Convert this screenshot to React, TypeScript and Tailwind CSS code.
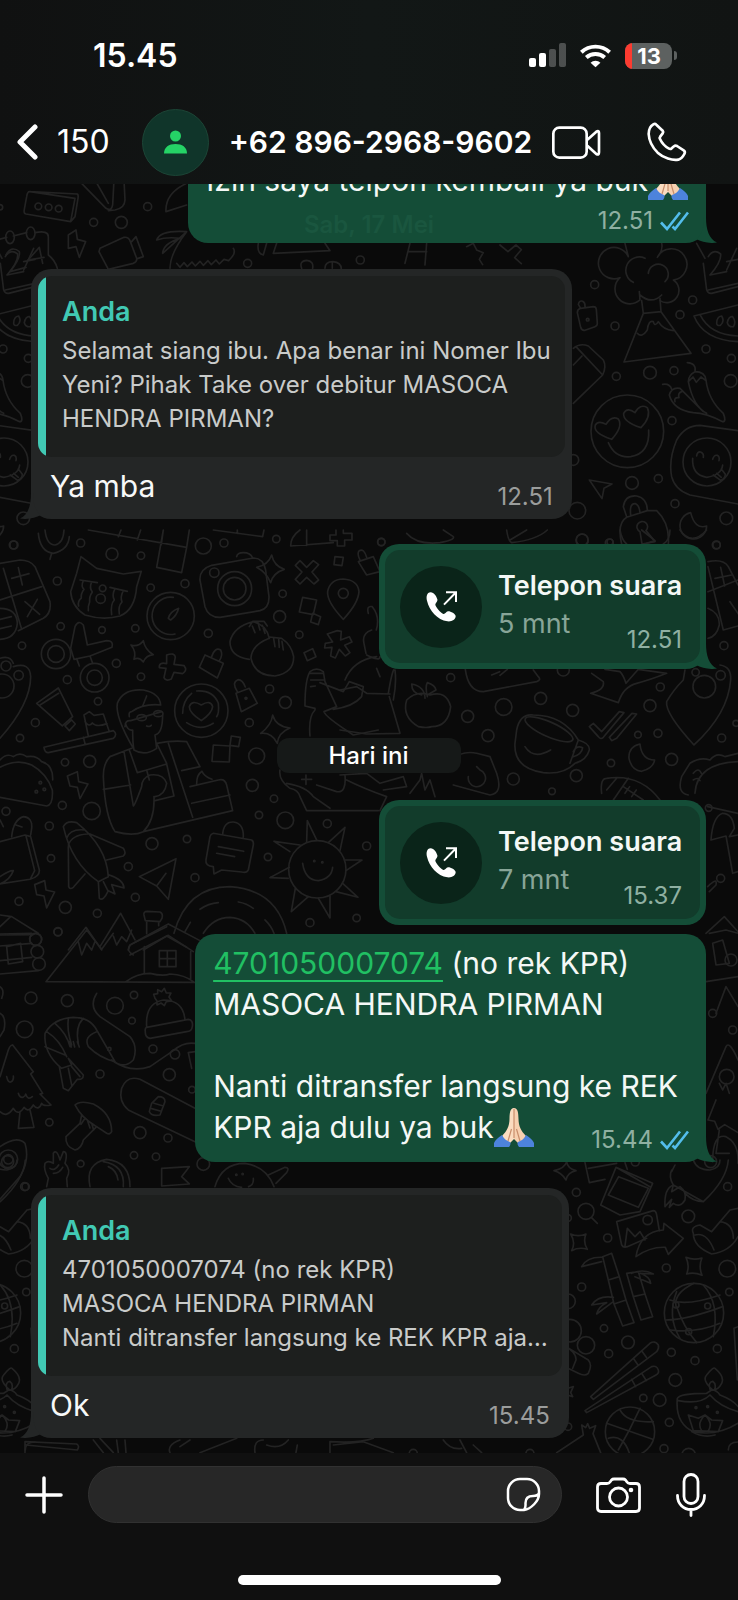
import type { ReactNode } from "react";

type Dot = [number, number, number];

function Dots({ items }: { items: Dot[] }) {
  return (
    <>
      {items.map(([x, y, r]) => (
        <circle key={`${x}-${y}`} cx={x} cy={y} r={r} />
      ))}
    </>
  );
}

function DoodlesTop() {
  return (
    <g transform="translate(0 180) scale(.3333)">
      <path d="M90 35 L225 55 L212 125 L78 102 Q70 100 73 88 L80 50 Q82 34 90 35 L232 42 Q236 45 234 55 L225 110 L212 125" />
      <Dots items={[[115, 79, 10], [146, 82, 10], [176, 86, 10], [443, 80, 12], [281, 127, 12], [364, 127, 18], [0, 82, 8], [743, 250, 12], [1081, 240, 12]]} />
      <path d="M235 0 L318 85 Q335 95 338 75 L342 0 M285 0 L325 70 M372 0 L375 60 Q374 85 345 90 L325 92 M498 95 Q495 40 560 10 M498 95 L560 75" />
      <path d="M205 165 L228 150 L232 178 L257 185 L238 232 L228 200 L205 205Z" />
      <path d="M300 205 L372 172 Q385 170 390 182 L410 235 Q412 245 400 250 L325 268 L297 215Z M395 185 L408 170 L430 230 L412 236" />
      <path d="M560 155 Q480 150 470 180 Q500 170 540 175 Q490 190 488 220 L560 155 Q510 220 510 265 M530 250 l10 12 l12 -14 l10 12 l14 -14 l10 12 l14 -14 l10 12 l14 -14 l10 12 l14 -14 l10 12 l14 -14 l14 4 Q710 220 700 205" />
      <path d="M775 190 Q770 220 790 225 L800 190 M830 190 L820 220 L990 212 L975 190 M905 265 q-8 -22 15 -24 q22 2 18 24 M975 265 q0 -20 24 -20 q25 2 25 22 M997 250 v15" />
      <path d="M1230 190 l-15 60 M1225 215 h55 M1280 190 l-5 65 M1400 200 l20 -10 l10 20 l20 8 l-12 20 l10 16 M1500 195 l24 20 l24 -20 l16 14 l-20 24 l20 18" />
      <path d="M-10 180 L20 172 M40 168 L80 158 M105 158 Q145 150 145 170 L145 225 Q165 240 172 265" />
      <ellipse cx="30" cy="172" rx="13" ry="19" />
      <ellipse cx="92" cy="160" rx="13" ry="19" />
      <path d="M18 225 Q35 195 58 215 Q62 235 30 275 L78 262 M128 250 L118 202 L84 240 L132 232" />
    </g>
  );
}

function DoodlesEmoji({ x }: { x: number }) {
  return (
    <g transform={`translate(${x} 240) scale(.3333)`}>
      <path d="M195 10 Q200 30 205 50 A47 47 0 1 0 180 113 A42 42 0 1 0 240 180 L238 155 M305 10 Q310 30 292 52 A47 47 0 1 1 340 120 A36 36 0 1 1 300 182 M240 165 Q275 195 305 165 M255 55 A40 40 0 0 0 220 127 M265 100 A30 30 0 1 1 315 125" />
      <path d="M245 182 L250 220 L303 215 L300 175 M250 220 L192 366 L393 340 L303 215 M232 280 Q245 295 262 270 Q265 240 280 245 Q285 262 295 245 Q310 270 340 272" />
      <path d="M62 205 L100 200 Q108 200 109 208 L112 250 Q112 258 105 260 L75 271 Q65 273 62 262 L52 218 Q52 208 62 205 M62 205 L55 193 Q58 180 68 184 Q76 188 75 200" />
      <path d="M40 325 Q60 308 85 318 L130 360 Q140 380 128 405 L40 490 M50 322 L128 405 M40 375 L66 348" />
      <circle cx="202" cy="574" r="109" />
      <path d="M155 598 Q98 580 106 555 Q115 540 138 553 Q155 525 175 537 Q190 560 155 598Z M243 563 Q188 545 191 520 Q202 500 225 518 Q240 490 262 503 Q275 530 243 563Z M145 608 Q165 655 212 650 Q270 640 266 570" />
      <path d="M534 572 L420 556 Q375 556 350 600 Q325 660 335 710 Q345 750 390 765 L534 792" />
      <circle cx="441" cy="666" r="72" />
      <path d="M398 655 Q395 705 440 712 Q485 705 488 675 M410 648 q2 -14 12 -12 q10 4 8 16 M458 658 q4 -14 14 -12 q8 4 5 16 M460 705 l22 16 q14 -4 14 -18 l-12 -16 M470 700 l14 12" />
      <path d="M88 720 L156 732 L132 745 L126 776Z" />
      <path d="M200 830 L190 800 Q195 765 230 768 Q262 775 262 812 L290 812 Q330 850 325 912 M262 812 L200 832 Q170 850 185 912 M212 825 q-4 -36 14 -34 q12 4 14 28 M240 875 A16 16 0 1 1 258 872 L285 905 L246 912Z" />
      <path d="M392 818 A40 40 0 1 0 440 858 Q405 870 392 818Z" />
      <path d="M410 10 L435 55 M430 70 L440 150 Q445 162 455 160 L534 140 M445 150 L534 130 M445 50 Q460 25 482 42 Q485 65 450 105 L500 95 M500 90 L530 25 M500 65 L534 58" />
      <path d="M402 228 L534 195 M402 228 Q430 300 534 305 M420 224 Q450 285 534 288 M470 250 q0 -20 15 -22 q10 16 -4 28 q-10 2 -11 -6 M502 248 q4 -20 16 -18 q12 16 2 30 q-14 2 -18 -12" />
      <path d="M382 368 Q410 370 405 395 Q385 405 385 425 Q400 500 440 520 M405 395 Q435 395 438 420 Q445 480 490 520 Q500 545 488 545 Q440 520 400 518 Q340 510 328 465 Q335 440 360 445 L430 515 M308 433 Q330 430 335 448 M385 425 l14 -14 l10 16 l14 -16 l14 10 M345 485 q-4 -14 12 -12 q-4 -14 8 -18" />
      <Dots items={[[104, 134, 12], [165, 258, 12], [398, 180, 12], [360, 224, 12], [438, 327, 12], [514, 355, 12], [512, 423, 19], [270, 398, 19], [342, 392, 12], [169, 409, 12], [336, 542, 12], [216, 729, 19], [295, 716, 12], [345, 791, 12], [499, 835, 19], [469, 915, 12], [52, 812, 25], [66, 900, 18], [148, 909, 12], [40, 660, 16], [83, 239, 4]]} />
    </g>
  );
}

function DoodlesMiddle() {
  return (
    <g transform="translate(0 530) scale(.3333)">
      <path d="M265 0 L560 52 L545 128 L470 112 L490 0 M355 20 l8 -20 M412 30 l10 -30 M484 44 L490 0 M568 0 L560 52 M640 0 L788 20 L792 0 M712 10 v-10" />
      <path d="M115 10 Q120 65 160 70 Q205 60 208 20 M135 0 Q140 45 165 45 Q190 40 192 0 M155 70 L150 88" />
      <path d="M0 100 L60 90 Q90 90 105 110 L150 215 Q155 250 130 265 L55 302 M10 115 L65 298 M0 210 L125 170 M35 145 l52 -14 M55 113 l12 52 M75 215 l44 38 M112 208 l-30 52 M0 235 Q50 235 52 280 Q48 325 0 328 M0 268 l34 -8 M0 296 l34 -8" />
      <path d="M243 80 L290 115 L370 132 L424 124 L410 170 Q405 240 360 258 Q310 272 255 255 Q215 230 212 185 L230 130Z M240 150 l52 8 M250 152 q-8 18 2 26 q-10 14 -8 26 q-12 10 -8 24 M275 156 q-8 18 2 30 q-10 14 -8 30 q-6 14 -4 26 M330 172 l52 12 M345 176 q-10 20 -2 34 q-12 12 -8 44 M370 182 q-10 20 -4 34 q-12 12 -8 36" />
      <circle cx="302" cy="206" r="14" /><circle cx="308" cy="175" r="10" />
      <circle cx="512" cy="258" r="71" /><path d="M520 202 A56 56 0 1 0 525 312 M505 265 Q510 245 536 235 Q530 258 512 270Z" />
      <path d="M600 150 Q598 118 635 106 L760 84 Q790 84 797 120 L807 200 Q808 235 780 242 L660 262 Q625 262 615 230Z M710 80 Q712 68 730 68 Q752 68 758 84" />
      <circle cx="704" cy="176" r="51" /><circle cx="704" cy="176" r="34" /><circle cx="643" cy="128" r="14" />
      <path d="M815 75 Q822 108 853 118 Q820 128 812 158 Q800 128 770 112 Q805 105 815 75Z" />
      <path d="M900 92 l20 20 l20 -20 l16 12 l-20 22 l20 24 l-14 12 l-22 -20 l-20 20 l-14 -14 l20 -22 l-20 -20Z" />
      <path d="M900 0 Q872 20 872 48 L1000 38 M920 0 v46 M990 15 h18 v-15 M1030 0 v10 h26 v20 h-22 v18 h-22 v-16 h-22 v-17" />
      <path d="M908 202 L950 210 L940 254 L898 246Z M938 250 L962 260 L955 284 L932 276Z M1005 80 L1030 82 L1026 107 L1002 104Z M912 368 L938 356 L948 380 L922 392Z" />
      <path d="M1030 268 Q980 215 983 185 Q990 148 1030 147 Q1074 150 1077 185 Q1075 220 1030 268Z" /><circle cx="1030" cy="190" r="15" />
      <path d="M1075 95 L1120 80 L1140 125 L1100 135Z M1080 90 q-10 -20 -2 -28 q14 -8 22 20" />
      <path d="M1012 302 l12 2 l-2 26 l26 -10 l8 16 l-22 10 l16 22 l-14 10 l-18 -20 l-12 26 l-14 -6 l4 -26 l-22 2 l2 -14 l22 -4 l-16 -24Z" />
      <circle cx="168" cy="372" r="44" /><circle cx="168" cy="372" r="25" /><circle cx="284" cy="443" r="43" /><circle cx="284" cy="443" r="23" />
      <path d="M212 355 L225 290 Q235 268 250 285 L262 345 L320 332 Q342 332 336 352 L270 378 L278 400 M222 388 L270 378 M212 355 l10 33 M238 408 l-8 -22" />
      <path d="M393 345 Q415 352 430 332 Q435 360 460 374 Q438 376 430 396 Q418 380 402 388 Q410 365 393 345Z" />
      <path d="M500 375 q24 -8 26 6 l-4 22 l30 4 q12 14 -4 24 l-26 -4 l-8 20 q-16 8 -22 -4 l6 -28 l-20 -2 q-2 -18 22 -12Z" />
      <path d="M615 375 L670 400 L652 444 L598 412Z M635 380 Q645 350 662 360 Q670 375 658 392" />
      <path d="M748 388 Q690 380 690 335 Q700 290 760 275 Q800 285 808 325 M748 290 l10 -16 h34 l10 14 M765 308 l-8 -20 M780 300 l-6 -22 M795 310 l-8 -24" />
      <path d="M808 325 Q755 345 753 385 Q765 438 825 438 Q882 428 881 380 Q875 345 845 325 l-36 -4Z M825 350 l-4 -24 M838 352 l-2 -26 M850 360 l-4 -26" />
      <path d="M110 520 L175 474 L218 560 L187 588Z M120 525 L176 490 M195 588 L215 570 L226 582 L208 602Z" />
      <path d="M0 385 Q30 375 40 400 M40 410 Q90 395 92 440 Q92 520 0 625" /><circle cx="18" cy="408" r="15" /><circle cx="56" cy="436" r="14" /><circle cx="6" cy="468" r="36" />
      <path d="M132 652 L340 602 Q354 612 340 625 L145 668 Q134 668 132 652Z M250 622 l6 22 M265 618 L252 555 L268 545 L282 556 L310 552 L328 605 M255 575 q12 18 22 4 q12 14 44 2" />
      <path d="M400 655 Q345 560 352 520 Q370 475 430 480 Q480 490 482 525 Q430 520 395 545 Q385 545 388 560 M375 590 Q375 570 392 572 L485 545 M440 498 l-12 30 M376 580 q8 24 22 20 Q398 640 402 660 Q435 680 470 655 L465 615 Q488 610 488 555 M440 588 q10 4 14 -2" />
      <ellipse cx="425" cy="563" rx="14" ry="9" /><ellipse cx="475" cy="551" rx="14" ry="9" />
      <path d="M395 655 L330 680 Q310 700 310 740 Q315 860 345 905 Q400 920 430 905 Q465 870 462 800 M372 665 L400 828 Q405 825 425 770 Q425 745 450 735 Q490 730 500 760 Q495 795 465 800 M310 778 L392 765 M440 720 L500 702 L522 798 L465 812 M440 720 L448 750 M388 660 L412 728 L440 720 M470 640 L500 700 M470 640 Q520 630 560 635 L600 710 L545 722 M505 640 L578 862 M430 905 L698 842 L680 765 Q675 745 655 750 L570 770 M575 820 L690 795 M590 762 q0 -28 16 -38 q6 16 30 24" />
      <circle cx="604" cy="542" r="80" /><path d="M604 572 Q568 548 568 530 Q575 508 604 525 Q632 508 638 530 Q636 550 604 572Z M575 490 Q548 512 548 550 M590 483 Q640 480 655 520 Q658 550 650 560 M560 578 Q600 605 640 580" />
      <path d="M708 490 L748 475 L772 520 L724 545Z M712 485 q-18 -28 2 -36 q14 0 22 22 M818 555 Q828 590 870 594 Q835 608 832 640 Q815 606 782 610 Q815 585 818 555Z M640 645 L690 648 L688 696 L636 694Z M694 618 L721 622 L716 650 L690 646Z" />
      <circle cx="738" cy="505" r="3" />
      <path d="M0 690 Q20 668 40 680 Q60 665 80 680 Q110 675 125 695 Q160 705 158 750 M0 712 Q50 685 95 705 Q140 730 157 780 Q160 825 140 828 L0 802" /><circle cx="121" cy="758" r="4" /><circle cx="109" cy="785" r="4" /><circle cx="133" cy="778" r="4" />
      <path d="M202 738 L232 725 L236 755 L264 762 L240 806 L232 772 L210 768Z M104 1064 L134 1052 L138 1080 L164 1086 L140 1134 L132 1098 L110 1094Z" />
      <path d="M0 935 L75 915 L92 920 L118 1020 Q120 1040 90 1048 L0 1062 M92 1045 L104 1022 L78 918 M35 920 Q40 870 70 860 Q98 862 95 895 L92 915 M0 870 L10 890 M48 885 l18 6 M0 1040 Q30 1020 40 1022 Q30 1050 0 1062" />
      <path d="M190 890 Q200 870 230 878 Q320 950 325 1040 L295 1055 Q215 1000 190 890Z M200 925 Q210 895 255 900 M205 945 Q215 915 262 912 M270 912 L370 955 Q380 970 370 978 L320 990 M205 950 L206 1070 Q210 1080 220 1072 L255 1032 M295 1055 L298 1105 Q310 1115 325 1082 L345 1092 L335 1064 L372 1074 Q372 1050 328 1035 M310 1055 l14 28" />
      <path d="M418 1040 L528 986 L505 1108 L470 1068Z M470 1068 L498 1030" />
      <path d="M640 910 L755 930 Q762 935 760 945 L745 1020 Q740 1030 725 1026 L665 1020 L642 1032 L640 1010 Q615 1008 618 990 L630 920 Q632 912 640 910Z M668 915 Q670 875 700 876 Q732 880 730 922 M655 950 l76 14 M650 970 l54 10" />
      <circle cx="952" cy="1018" r="86" /><path d="M908 1000 Q915 1050 955 1052 Q995 1045 998 1012 M870 965 L822 934 L900 945 M920 935 L922 872 L950 930 M985 938 L1035 892 L1020 962 M1035 990 L1086 990 L1038 1022 M1028 1060 L1074 1102 L1008 1085 M990 1098 L990 1164 L955 1105 M925 1100 L874 1145 L886 1075 M865 1045 L810 1043 L868 1012" />
      <circle cx="943" cy="993" r="2" /><circle cx="967" cy="997" r="2" />
      <path d="M522 1210 Q560 1070 690 1070 Q830 1080 860 1210 M600 1138 Q625 1120 655 1118 M715 1116 Q740 1120 760 1135 M610 1210 Q640 1162 690 1162 Q740 1165 765 1210 M555 1205 l16 -28 M795 1170 Q815 1190 822 1210" />
      <path d="M205 1260 L258 1192 L305 1260 M300 1250 L362 1150 L405 1230 M432 1155 Q430 1144 442 1144 L480 1146 Q490 1150 486 1165 L480 1175 L436 1172Z M440 1175 v36 M476 1175 v12 M385 1260 L390 1245 L505 1182 L600 1232 M430 1260 L500 1218 L560 1252 M0 1155 L35 1160 L115 1210 M0 1215 L100 1214 M0 1190 L32 1160" /><circle cx="107" cy="1228" r="18" />
      <path d="M840 720 Q835 750 870 775 Q895 780 900 800 L920 842 L1135 842 M860 760 Q920 770 940 800 L990 835 M905 748 h30 M918 735 v28 M1035 735 Q1040 790 1010 785 L950 765 M1040 750 Q1090 775 1160 800 L1140 842 M930 618 Q925 560 945 540 L945 535 L915 528 Q915 450 930 425 Q950 410 970 425 L975 455 L1010 530 L972 545 Q975 560 1060 615 L1135 600 M930 430 h40 M932 450 h40 M932 470 l14 -2 M960 458 L1030 485 L1048 455 M1035 450 Q1060 390 1130 380 M1048 455 L1090 470 L1085 500 Q1060 530 1000 538 M1130 415 L1140 440 M1092 340 Q1085 310 1115 300 M1100 375 Q1140 395 1140 380 M1092 340 l6 30 M1105 250 q-6 -24 12 -20 q24 30 12 70" />
      <Dots items={[[42, 45, 12], [242, 39, 12], [336, 72, 18], [423, 77, 11], [172, 153, 12], [452, 173, 11], [555, 161, 12], [610, 48, 24], [672, 39, 12], [829, 27, 11], [1144, 36, 11], [848, 191, 11], [839, 260, 18], [898, 314, 11], [182, 289, 11], [306, 300, 10], [406, 295, 11], [625, 310, 12], [66, 347, 11], [349, 400, 12], [202, 449, 12], [423, 440, 11], [294, 514, 11], [106, 578, 12], [60, 624, 11], [809, 477, 12], [856, 517, 18], [748, 578, 12], [770, 678, 24], [757, 766, 18], [822, 806, 11], [195, 697, 11], [269, 694, 18], [187, 826, 12], [275, 843, 26], [18, 844, 12], [148, 888, 12], [153, 985, 11], [456, 941, 18], [561, 927, 11], [777, 855, 11], [856, 871, 25], [982, 881, 12], [1100, 948, 12], [804, 981, 11], [385, 1010, 12], [585, 1043, 12], [406, 1102, 12], [57, 1114, 12], [196, 1132, 18], [292, 1150, 12], [174, 1205, 12], [930, 1178, 12], [1070, 1164, 11]]} />
    </g>
  );
}

function DoodlesRight() {
  return (
    <>
      <g transform="translate(340 530) scale(.3333)">
        <path d="M200 10 Q230 45 300 38 Q345 30 340 20 L310 0 M500 0 Q505 35 515 38 Q590 30 622 0 M510 30 L560 0 M840 0 Q845 30 860 42 M905 0 L945 32 L920 40 M990 0 Q990 30 970 42 M1020 0 Q1055 50 1100 0" />
        <path d="M1104 95 Q1150 85 1165 110 L1194 165 M1104 185 L1194 150 M1104 110 L1150 300 L1194 288 M1125 145 l50 -10 M1142 112 l12 56 M1170 215 l26 38 M1104 235 Q1140 250 1138 285 Q1130 320 1104 325" />
        <path d="M270 495 Q230 480 200 510 Q185 560 235 590 Q260 595 275 590 Q325 590 332 530 Q320 480 270 495Z M255 505 Q255 470 215 462 Q215 490 245 495 M262 500 Q255 470 262 458 Q285 465 288 480 L262 495" />
        <path d="M376 418 Q385 485 430 485 L590 455 Q605 450 595 440 L580 420 M455 435 l24 -10 M480 436 l22 -18" />
        <path d="M530 600 Q540 550 580 555 Q670 555 715 630 Q750 640 748 660 Q740 690 705 700 Q670 735 610 728 Q520 715 525 640Z M715 630 L690 700 M700 665 q10 -20 28 -12 q-2 20 -30 28 M555 650 Q580 690 632 660" />
        <ellipse cx="627" cy="598" rx="78" ry="22" transform="rotate(24 627 598)" />
        <path d="M748 590 L760 580 L785 605 L838 545 L852 548 L790 622 Q782 630 775 620Z M808 622 L876 550 L890 552 L830 625 L815 632Z" />
        <path d="M795 418 L840 425 Q850 435 858 460 L895 418 L980 430 Q930 450 890 460 Q850 470 835 518 L752 490 Q795 480 790 455 L755 430" />
        <path d="M900 642 Q865 650 867 685 Q875 722 905 724 Q940 715 944 690 Q905 690 900 642Z" />
        <path d="M1062 645 Q975 550 980 515 Q1000 480 1030 450 L1035 420 M1062 645 Q1165 550 1172 450 Q1175 410 1140 405" /><circle cx="1093" cy="470" r="34" /><circle cx="1142" cy="436" r="14" />
        <path d="M1045 795 Q1010 790 1025 740 L1050 700 Q1080 680 1110 690 Q1130 665 1155 680 L1194 670 M1065 790 Q1070 700 1194 695 M1060 730 q16 -20 24 0 M1060 750 q14 -10 20 2" />
        <path d="M785 790 Q780 745 800 745 Q900 730 960 810 M800 780 l30 -35 M820 810 l45 -65 M850 770 l60 40 M855 790 l14 -20 M875 800 l14 -20" />
        <path d="M330 690 Q370 660 410 670 L450 680 L470 730 Q490 790 450 795 L340 765 M385 740 A26 26 0 1 0 420 720 l-10 -10 M0 735 L80 730 L120 760 L190 740 L200 770 L130 780 M210 790 L240 750 L245 730 L255 780 L270 750 L285 800 M0 600 L80 612 L180 610 L148 500 M165 420 Q170 460 160 510 M145 490 q10 -60 16 -70 M0 480 L50 470 L80 490 L150 492" />
        <Dots items={[[124, 36, 11], [727, 30, 18], [810, 36, 9], [1130, 45, 11], [1152, 347, 12], [332, 443, 12], [602, 505, 18], [491, 531, 25], [383, 559, 18], [444, 617, 18], [698, 541, 18], [961, 471, 12], [930, 527, 18], [894, 614, 10], [954, 610, 12], [1145, 624, 12], [995, 688, 18], [813, 699, 11], [709, 737, 18], [520, 747, 18], [636, 784, 10], [1067, 427, 11], [1188, 580, 9], [670, 420, 18]]} />
      </g>
      <g transform="translate(706 800) scale(.3333)">
        <path d="M5 20 L96 40 M15 120 Q20 50 50 40 Q80 40 85 85 L70 110 L96 105 M15 120 L60 108 L80 220 L96 215 M5 260 Q35 230 30 255 L10 275 M0 400 L55 350 L96 395 M10 400 L60 390 L96 400 M20 430 l30 -10 l20 70 l-40 5z M0 545 l96 -15 M30 640 L60 560 L96 620 M0 880 L60 740 Q70 720 96 780 M40 850 l10 20 l10 -20 l10 30 M30 900 l-24 60 l20 4 l10 24 l20 -14 l40 24 M40 990 l-10 70 h40 M20 1085 Q20 1000 60 1010 Q100 1030 96 1090" />
        <Dots items={[[8, 24, 10], [44, 235, 12], [75, 480, 18], [80, 690, 12], [62, 830, 22], [20, 640, 12]]} />
      </g>
    </>
  );
}

function DoodlesForest() {
  return (
    <g transform="translate(0 930) scale(.3333)">
      <path d="M0 12 L95 10 M0 48 L95 40 M0 92 L95 82 M0 132 L115 122 M20 50 L62 40 L68 95 L25 102Z" />
      <circle cx="107" cy="28" r="18" /><circle cx="112" cy="65" r="19" /><circle cx="117" cy="102" r="19" />
      <path d="M260 0 L138 155 L585 157 M260 0 L305 58 L340 10 M235 35 L245 75 L260 40 L275 60 L285 35 M340 18 L350 45 L365 20 L380 35 L395 0 M385 60 Q385 45 400 40 L500 -10 M390 75 L505 16 L580 65 M400 75 Q390 70 385 60 M433 50 V130 M572 65 V150 M378 155 Q410 130 450 130 Q490 140 510 132 Q555 135 580 155 M478 62 H528 V110 H478Z M502 62 V110 M478 86 H528" />
      <path d="M0 170 Q15 180 5 205 M0 250 Q20 260 12 300 L0 320" />
      <path d="M290 190 Q265 230 300 260 L390 320 Q415 350 400 390 Q370 420 335 390 Q390 430 450 410 L520 362 Q550 335 585 340" /><circle cx="525" cy="373" r="14" />
      <path d="M185 415 Q130 370 135 310 Q160 265 220 262 Q270 262 290 300 L345 395 Q300 385 265 350 Q250 320 290 305 M140 305 Q180 330 200 380 M165 280 Q200 310 210 350 M205 265 Q200 300 215 345 M250 265 Q225 290 235 340 M135 350 L195 375 M185 415 L215 405 L205 385 L250 435 Q250 450 232 448 L205 482 L190 475 L178 410 M205 415 L215 465 M215 410 L240 440 M208 335 l6 16 M220 335 l4 16 M232 335 l6 16" /><circle cx="328" cy="357" r="5" />
      <path d="M440 290 Q435 220 490 210 Q550 210 555 270 M440 292 L565 268 Q580 270 577 290 Q575 305 560 305 L450 325 Q435 322 436 305 Q434 294 440 292Z M465 205 l-4 -12 l12 -2 l0 -12 l12 6 l8 -10 l6 14 l14 0 l-6 12 l8 12 l-16 2 l-6 12 l-10 -8 l-12 6 l0 -12Z" />
      <path d="M38 345 Q30 345 25 360 L0 440 M38 345 L100 425 L92 432 L128 490 L120 492 L153 525 Q130 530 125 520 Q115 545 100 525 Q85 550 72 532 Q55 560 40 535 Q20 565 0 545 M20 440 q4 18 12 16 q10 -4 8 -18 M55 490 q4 14 14 12 q8 -4 8 -10 q6 20 20 8 M60 545 L55 595 L102 592 L90 540" />
      <path d="M225 525 Q240 510 280 522 Q335 550 335 605 Q330 615 320 610 L290 590 Q245 565 225 525Z M245 555 L240 580 L198 620 Q195 650 225 660 Q245 655 250 630 L290 590 M262 570 l8 24 M275 580 l6 20 M255 565 l-12 18" />
      <path d="M585 535 L420 448 Q380 435 365 475 Q355 515 385 540 L585 635 M455 520 L475 500 Q495 500 495 515 L480 555 Q455 560 448 545Z M462 520 l28 8 M455 536 l28 8" />
      <path d="M585 365 L565 368 L575 415 M485 715 L568 710 L545 740 L568 762 L485 768Z" />
      <path d="M0 650 Q50 615 75 640 Q90 690 60 740 L0 808" /><circle cx="25" cy="688" r="28" /><circle cx="25" cy="688" r="14" />
      <path d="M140 770 L145 745 Q130 720 135 700 Q145 690 160 700 L160 670 Q170 655 180 690 L190 665 Q205 665 195 700 Q215 720 200 745 L202 770 M150 715 q14 10 26 -10 M160 730 q18 0 28 -18" />
      <path d="M270 770 Q255 700 320 688 Q390 695 390 770 M370 770 Q375 705 310 695 M325 710 Q350 720 354 750" />
      <path d="M645 770 Q665 700 735 700 Q800 710 822 770 M685 745 Q695 770 725 772 M760 745 q2 20 -14 25 M805 735 L855 712 Q870 712 860 728 L828 760" />
      <Dots items={[[93, 204, 18], [202, 212, 18], [345, 227, 25], [402, 195, 11], [396, 272, 10], [74, 298, 25], [100, 368, 11], [459, 357, 12], [300, 432, 12], [508, 434, 18], [148, 577, 11], [420, 608, 18], [504, 624, 12], [402, 676, 11], [468, 680, 11], [242, 701, 10], [610, 702, 19], [77, 770, 11], [174, 6, 12], [576, 479, 10], [709, 734, 2], [728, 732, 2]]} />
    </g>
  );
}

function DoodlesLamp({ x }: { x: number }) {
  return (
    <g transform={`translate(${x} 1160) scale(.3333)`}>
      <path d="M80 5 Q82 25 108 32 Q82 38 78 60 Q65 38 42 32 Q74 25 80 5Z M135 8 L148 68 L195 58 M145 25 L230 10 M255 8 L262 28 M228 22 L338 70 L300 155 L240 165 L182 135Z M236 50 L325 85 L295 142 L205 105Z M228 22 L330 80" />
      <path d="M230 185 L340 152 Q348 152 350 165 L358 212 M230 185 L245 255 Q250 264 262 260 L320 235 M255 258 L262 205 L285 230 L300 215 L315 240" /><circle cx="323" cy="180" r="14" />
      <path d="M288 290 Q300 215 370 210 L372 190 L430 235 L385 283 L376 262 Q330 260 288 290Z" />
      <path d="M460 0 Q470 30 510 30 Q540 25 540 0 M565 0 Q560 60 490 125 Q460 125 435 100 M395 30 Q385 50 400 75 L490 125 M405 15 L395 35 M375 140 Q372 85 400 75 L395 95 L420 80 Q440 95 435 120 Q420 145 400 130 L388 142 L395 118Z" /><circle cx="512" cy="5" r="18" />
      <path d="M460 220 Q450 200 480 195 L515 215 L570 150 L594 145 M460 220 Q460 260 515 282 Q570 275 594 230 M540 185 Q580 190 580 235 M465 225 Q500 215 522 270" />
      <path d="M92 222 Q115 232 138 222 Q128 245 142 268 Q118 260 95 272 Q108 248 92 222Z M438 292 Q462 302 486 294 Q475 318 486 346 Q462 335 440 342 Q450 318 438 292Z" />
      <circle cx="138" cy="154" r="24" /><path d="M154 172 L172 190" />
      <path d="M188 290 L215 280 L238 350 L205 360Z M205 360 L238 350 L258 420 L222 432Z M222 432 L258 420 L282 488 L248 498Z M188 292 Q140 290 125 320 L185 305 M220 412 Q175 405 155 435 L200 428 Q175 440 170 462 L220 425 M260 340 L295 335 L315 402 L280 410Z M280 410 L315 402 L338 470 L303 480Z M275 340 Q310 325 340 342 L300 340 Q330 350 332 370 L285 350" />
      <circle cx="462" cy="459" r="89" /><path d="M390 420 Q440 440 540 405 M378 480 Q440 480 548 440 M390 510 Q470 520 540 490 M410 395 Q380 470 420 535 M490 375 Q540 430 520 530 M410 440 Q430 500 470 548 M462 370 Q400 400 408 440" /><circle cx="408" cy="435" r="9" /><circle cx="503" cy="438" r="9" /><circle cx="446" cy="515" r="9" />
      <path d="M152 710 L330 550 Q345 540 355 555 Q358 565 350 575 L160 718Z M280 595 l14 20 M305 572 l14 20 M135 752 L335 620 Q350 615 355 630 Q358 640 348 645 L140 758Z M275 658 l12 22 M305 640 l14 22" />
      <circle cx="270" cy="815" r="74" /><path d="M200 790 L338 838 M300 745 Q270 810 235 870 M240 750 Q260 790 340 785 M205 835 Q250 820 270 885" />
      <path d="M412 715 Q420 700 500 700 L515 690 Q530 690 540 705 Q580 720 594 740 M412 715 Q405 790 460 815 Q530 830 594 790 M415 722 Q480 735 510 705 Q540 740 594 755 M518 690 Q485 660 500 645 Q520 620 525 625 Q555 650 545 670 Q535 690 518 690 M510 688 q-6 -22 8 -24 q12 8 6 24 M445 765 L475 775 L495 765 L515 780 L548 782 L535 815 L460 812Z M485 812 Q470 790 495 765 Q520 790 505 812 M455 815 Q490 835 525 825" />
      <circle cx="468" cy="743" r="3" /><circle cx="503" cy="740" r="3" /><circle cx="532" cy="757" r="3" />
      <path d="M78 670 l8 14 l14 -4 l-8 18 l6 12 l-14 -4 l-6 16 M78 560 L145 600 Q158 615 145 640 Q135 650 115 640 L78 622 M78 560 Q110 580 108 600 L98 625 M50 878 L130 825 M130 825 l-5 -30 l12 8 l6 -12 l6 14 l18 -8 l-8 24 L182 878" />
      <path d="M582 505 L594 500 M582 505 L592 660 M565 870 q0 -24 29 -24" />
      <Dots items={[[109, 97, 12], [203, 234, 12], [445, 169, 19], [563, 80, 12], [379, 324, 12], [562, 326, 25], [568, 396, 11], [125, 381, 12], [84, 424, 22], [90, 512, 34], [138, 556, 26], [192, 505, 11], [264, 547, 19], [206, 581, 12], [394, 577, 12], [532, 566, 12], [465, 602, 12], [406, 660, 19], [310, 714, 11], [359, 720, 19], [388, 787, 12], [84, 800, 11], [372, 866, 12], [446, 885, 20], [84, 174, 10], [286, 6, 12]]} />
    </g>
  );
}

function Wallpaper() {
  return (
    <svg
      className="absolute inset-0 h-full w-full"
      viewBox="0 184 738 1269"
      preserveAspectRatio="xMinYMax slice"
      fill="none"
      stroke="#232323"
      strokeWidth="5"
      strokeLinecap="round"
      strokeLinejoin="round"
      aria-hidden="true"
    >
      <DoodlesTop />
      <DoodlesMiddle />
      <DoodlesRight />
      <DoodlesForest />
      <DoodlesEmoji x={560} />
      <DoodlesEmoji x={-143} />
      <DoodlesLamp x={540} />
      <DoodlesLamp x={-163} />
      <g transform="translate(0 1440) scale(.3333)">
        <path d="M75 38 V5 L230 12 Q240 18 232 30 L78 15 M280 0 L310 38 M300 -5 L340 38 M350 0 L355 38 M375 0 L378 38 M510 38 Q500 15 540 0 M600 38 L710 -5 M540 20 L570 0 M765 38 Q760 0 790 0 M800 15 Q840 30 865 0 M888 38 L892 15 M990 38 L990 5 Q1080 10 1120 -5 M1000 15 L1090 5 L1180 38 M1330 0 Q1350 30 1385 25 M1380 0 L1400 38 M1420 15 L1445 38" />
        <Dots items={[[1240, 40, 12], [1590, 40, 12]]} />
      </g>
    </svg>
  );
}

function Tail({ side }: { side: "left" | "right" }) {
  return (
    <svg
      viewBox="0 0 24 30"
      className={
        side === "right"
          ? "absolute -right-[11px] bottom-0 h-[30px] w-6 text-[#144d37]"
          : "absolute -left-[11px] bottom-0 h-[30px] w-6 -scale-x-100 text-[#242626]"
      }
      fill="currentColor"
      aria-hidden="true"
    >
      <path d="M13 4C13 17 16 26 24 29.500C17 31 9 29 3 26Q11 21 11 4Z" />
    </svg>
  );
}

function ReadTicks() {
  return (
    <svg width="29" height="20" viewBox="0 0 29 20" fill="none" stroke="#53bdeb" strokeWidth="2.600" role="img" aria-label="Dibaca">
      <path d="M1 11.500 7 18 20 1.500M12.500 15.500l2.500 2.500L28 1.500" />
    </svg>
  );
}

function PrayingHands() {
  return (
    <svg className="inline-block h-[40px] w-[40px] align-[-9px]" viewBox="0 0 40 40" role="img" aria-label="🙏🏻">
      <path d="M20 1C16 1 15.600 6 15.500 12C15.400 19 13 24 8 29L14 38L20 32Z" fill="#fbdcc0" />
      <path d="M20 1C24 1 24.400 6 24.500 12C24.600 19 27 24 32 29L26 38L20 32Z" fill="#f7d0b0" />
      <path d="M20 2V31M17.500 22C16 27 15 31 14 34M22.500 22C24 27 25 31 26 34" stroke="#c98e6c" strokeWidth="1.200" fill="none" />
      <path d="M8 28C4 31 1 33 0 36V40H15C16.500 38 17 36 16 35C13 34 10 32 8 28Z" fill="#4d83dc" />
      <path d="M32 28C36 31 39 33 40 36V40H25C23.500 38 23 36 24 35C27 34 30 32 32 28Z" fill="#4d83dc" />
    </svg>
  );
}

function SentBubble({ children, time }: { children: ReactNode; time: string }) {
  return (
    <div className="relative w-fit self-end rounded-[20px] bg-[#144d37] px-[18px] text-[30px] leading-[41px] text-[#f4f8f6]">
      {children}
      <div className="absolute right-[17px] bottom-[10px] flex items-center gap-[7px] text-[24px] leading-[24px] text-[#8fb0a2]">
        {time}
        <ReadTicks />
      </div>
      <Tail side="right" />
    </div>
  );
}

interface CallBubbleProps {
  duration: string;
  time: string;
  tail?: boolean;
}

function CallBubble({ duration, time, tail }: CallBubbleProps) {
  return (
    <div className="relative self-end rounded-[20px] bg-[#144d37] p-[6px]">
      <button className="flex h-[113px] w-[315px] items-center gap-4 rounded-[15px] bg-[#123c2b] pl-[15px] text-left">
        <span className="flex size-[82px] shrink-0 items-center justify-center rounded-full bg-[#0a2419]">
          <svg width="35" height="35" viewBox="250 180 105 105" fill="none" aria-hidden="true">
            <path
              fill="#fff"
              d="M270 190C258 190 256 205 259 215C266 245 290 272 320 277C332 279 345 272 345 262C345 254 328 246 322 247C316 248 314 256 308 255C298 250 288 238 284 228C284 222 292 218 290 211C288 203 280 190 270 190Z"
            />
            <path stroke="#fff" strokeWidth="6" d="M310 227 344 192M316 190H346V219" />
          </svg>
        </span>
        <span className="pb-[3px] text-[27px] leading-[38px]">
          <span className="block font-semibold whitespace-nowrap text-[#f4f8f6]">Telepon suara</span>
          <span className="block text-[#88a598]">{duration}</span>
        </span>
      </button>
      <span className="absolute right-6 bottom-[17px] text-[24px] leading-[24px] text-[#8fb0a2]">{time}</span>
      {tail && <Tail side="right" />}
    </div>
  );
}

interface ReplyBubbleProps {
  quote: string[];
  text: string;
  time: string;
}

function ReplyBubble({ quote, text, time }: ReplyBubbleProps) {
  return (
    <div className="relative w-fit rounded-[20px] bg-[#242626] p-[7px] pb-0">
      <div className="flex h-[181px] overflow-hidden rounded-[14px] bg-[#1d1f1e]">
        <div className="w-2 shrink-0 bg-[#41c9b4]" />
        <div className="pt-[13px] pr-[14px] pl-4">
          <div className="text-[27px] leading-[45px] font-semibold text-[#41c9b4]">Anda</div>
          {quote.map((line) => (
            <div key={line} className="text-[24px] leading-[34px] whitespace-nowrap text-[#c9cbca]">
              {line}
            </div>
          ))}
        </div>
      </div>
      <div className="flex h-[62px] items-start justify-between pt-[9px] pr-3 pl-3">
        <span className="text-[30px] leading-[41px] text-[#f7f8f8]">{text}</span>
        <span className="pt-[19px] text-[24px] leading-[24px] text-[#9b9d9c]">{time}</span>
      </div>
      <Tail side="left" />
    </div>
  );
}

function StatusBar() {
  return (
    <div className="flex h-[100px] items-center justify-between pt-[11px] pr-[61px] pl-[93px]">
      <span className="text-[32px] font-semibold">15.45</span>
      <div className="flex items-center gap-[13px]">
        <svg width="37" height="25" viewBox="0 0 37 25" fill="#fff" aria-hidden="true">
          <rect y="15" width="7" height="9" rx="2" />
          <rect x="10" y="10" width="7" height="14" rx="2" />
          <rect x="20" y="6" width="7" height="18" rx="2" opacity=".25" />
          <rect x="30" y="0" width="7" height="24" rx="2" opacity=".25" />
        </svg>
        <svg width="33" height="25" viewBox="236 66 100 76" fill="none" stroke="#fff" strokeWidth="12" aria-hidden="true">
          <path d="M243 94A63 63 0 0 1 329 94M258 110A42 42 0 0 1 314 110" />
          <path d="M286 140 271 126A22 22 0 0 1 301 126Z" fill="#fff" stroke="none" />
        </svg>
        <div className="flex items-center gap-[2px]">
          <div className="flex h-[26px] w-[47px] items-center overflow-hidden rounded-[8px] bg-[#5d6160] text-[22px] leading-[26px] font-bold">
            <span className="h-full w-[7px] bg-[#fc3b30]" />
            <span className="flex-1 pr-[6px] text-center">13</span>
          </div>
          <span className="h-[9px] w-[3px] rounded-r-full bg-[#5d6160]" />
        </div>
      </div>
    </div>
  );
}

function ChatHeader() {
  return (
    <div className="flex h-[84px] items-center pr-[50px] pl-4">
      <button className="flex items-center gap-[18px] text-[32px]" aria-label="Kembali, 150 chat">
        <svg width="23" height="36" viewBox="0 0 23 36" fill="none" stroke="#fff" strokeWidth="5" strokeLinecap="round" strokeLinejoin="round">
          <path d="M19 3 4 18 19 33" />
        </svg>
        <span>150</span>
      </button>
      <div className="ml-8 flex size-[67px] shrink-0 items-center justify-center rounded-full border border-[#1c4536] bg-[#10352a]">
        <svg width="23" height="24" viewBox="0 0 23 24" fill="#25d366" aria-hidden="true">
          <circle cx="11.500" cy="6" r="5.500" />
          <path d="M0 23.500C0 17 5 14 11.500 14S23 17 23 23.500Z" />
        </svg>
      </div>
      <h1 className="ml-5 flex-1 text-[30px] font-semibold whitespace-nowrap">+62 896-2968-9602</h1>
      <button aria-label="Panggilan video">
        <svg width="50" height="35" viewBox="155 308 150 105" fill="none" stroke="#fff" strokeWidth="8" strokeLinejoin="round">
          <rect x="162" y="316" width="100" height="90" rx="18" />
          <path d="M264 352 291 328Q299 323 299 332V390Q299 399 291 395L264 370" />
        </svg>
      </button>
      <button className="ml-[45px]" aria-label="Telepon">
        <svg width="42" height="42" viewBox="437 299 126 126" fill="none" stroke="#fff" strokeWidth="8" strokeLinejoin="round">
          <path d="M459 309Q464 306 468 310L487 328Q490 332 487 336L480 345Q477 349 479 353C485 366 495 376 506 382Q510 384 514 381L521 375Q525 371 530 374L550 387Q556 391 552 398Q545 412 534 415C515 418 490 410 472 394C455 377 446 357 445 338Q445 317 459 309Z" />
        </svg>
      </button>
    </div>
  );
}

function Composer() {
  return (
    <footer className="h-[147px] shrink-0 bg-[#101010] pt-[13px]">
      <form className="flex items-center pr-8 pl-[25px]">
        <button type="button" aria-label="Lampirkan">
          <svg width="38" height="38" viewBox="0 0 38 38" stroke="#fff" strokeWidth="3.500" strokeLinecap="round">
            <path d="M19 2V36M2 19H36" />
          </svg>
        </button>
        <div className="relative ml-[25px] flex-1">
          <input
            type="text"
            aria-label="Pesan"
            className="block h-[57px] w-full rounded-full border border-[#313131] bg-[#272727] pr-16 pl-6 text-[30px] outline-none"
          />
          <button type="button" aria-label="Stiker" className="absolute top-[11px] right-[21px]">
            <svg width="35" height="35" viewBox="0 0 35 35" fill="none" stroke="#fff" strokeWidth="2.500" strokeLinejoin="round">
              <path d="M18 33H14A12 12 0 0 1 2 21V14A12 12 0 0 1 14 2H21A12 12 0 0 1 33 14V17C33 24 25 32 18 33ZM18 33C20 31 19.500 29 19.500 26Q19.500 19 27 19C30 19 32 19 33 16" />
            </svg>
          </button>
        </div>
        <button type="button" aria-label="Kamera" className="ml-[34px]">
          <svg width="45" height="36" viewBox="0 0 45 36" fill="none" stroke="#fff" strokeWidth="2.800" strokeLinejoin="round">
            <path d="M5 6.500H11Q13 6.500 14 5L15.500 3Q16.500 2 18 2H27Q28.500 2 29.500 3L31 5Q32 6.500 34 6.500H40Q43.500 6.500 43.500 10V31Q43.500 34.500 40 34.500H5Q1.500 34.500 1.500 31V10Q1.500 6.500 5 6.500Z" />
            <circle cx="22.500" cy="20" r="9" />
            <circle cx="35" cy="13" r="2.300" fill="#fff" stroke="none" />
          </svg>
        </button>
        <button type="button" aria-label="Rekam suara" className="ml-[35px]">
          <svg width="30" height="44" viewBox="0 0 30 44" fill="none" stroke="#fff" strokeWidth="2.800" strokeLinecap="round">
            <rect x="8" y="1.500" width="14" height="29" rx="7" />
            <path d="M1.500 22.500C1.500 31 7.500 36.500 15 36.500S28.500 31 28.500 22.500M15 36.500V42.500" />
          </svg>
        </button>
      </form>
      <div className="mx-auto mt-[52px] h-[10px] w-[263px] rounded-full bg-white" />
    </footer>
  );
}

export default function App() {
  return (
    <div className="flex h-screen flex-col overflow-hidden bg-[#0a0a0a] font-['Inter',sans-serif] text-white">
      <header className="h-[184px] shrink-0 bg-linear-to-r from-[#101111] via-[#121716] to-[#111413]">
        <StatusBar />
        <ChatHeader />
      </header>

      <main className="relative flex min-h-0 flex-1 flex-col justify-end overflow-hidden">
        <Wallpaper />
        <div className="relative flex flex-col items-start pr-8 pb-[15px] pl-[31px]">
          <SentBubble time="12.51">
            <p className="pt-2 pb-[42px] whitespace-nowrap">
              Izin saya telpon kembali ya buk
              <PrayingHands />
            </p>
          </SentBubble>

          <div className="mt-[26px]">
            <ReplyBubble
              quote={["Selamat siang ibu. Apa benar ini Nomer Ibu", "Yeni? Pihak Take over debitur MASOCA", "HENDRA PIRMAN?"]}
              text="Ya mba"
              time="12.51"
            />
          </div>

          <div className="mt-[25px] self-end">
            <CallBubble duration="5 mnt" time="12.51" tail />
          </div>

          <div className="mt-[69px] mb-[27px] w-[184px] self-center rounded-[12px] bg-[#161918] text-center text-[24px] leading-[35px] font-medium">
            Hari ini
          </div>

          <CallBubble duration="7 mnt" time="15.37" />

          <div className="mt-[9px] self-end">
            <SentBubble time="15.44">
              <p className="pt-[9px]">
                <a href="tel:4701050007074" className="text-[#21c063] underline decoration-2 underline-offset-[6px]">
                  4701050007074
                </a>{" "}
                (no rek KPR)
              </p>
              <p>MASOCA HENDRA PIRMAN</p>
              <p className="mt-[41px] pr-[10px] whitespace-nowrap">Nanti ditransfer langsung ke REK</p>
              <p className="h-[55px]">
                KPR aja dulu ya buk
                <PrayingHands />
              </p>
            </SentBubble>
          </div>

          <div className="mt-[26px]">
            <ReplyBubble
              quote={["4701050007074 (no rek KPR)", "MASOCA HENDRA PIRMAN", "Nanti ditransfer langsung ke REK KPR aja…"]}
              text="Ok"
              time="15.45"
            />
          </div>
        </div>
        <div className="absolute top-[23px] left-1/2 w-[184px] -translate-x-1/2 text-center text-[24px] leading-[35px] font-semibold text-[#1a563f]">
          Sab, 17 Mei
        </div>
      </main>

      <Composer />
    </div>
  );
}
